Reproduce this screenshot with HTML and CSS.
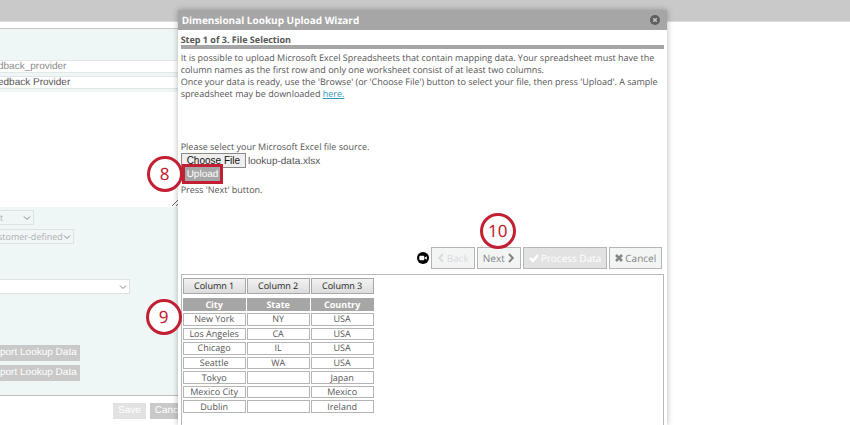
FILE: index.html
```html
<!DOCTYPE html>
<html lang="en">
<head>
  <meta charset="UTF-8">
  <meta name="viewport" content="width=device-width, initial-scale=1.0">
  <title>Dimensional Lookup Upload Wizard</title>
  <link rel="stylesheet" href="styles.css">
</head>
<body>
  <header class="topbar"></header>

  <!-- Lookup form behind the dialog -->
  <form class="lookup">
    <div class="panel">
      <input class="field muted" type="text" value="dback_provider" aria-label="Code" readonly>
      <input class="field" type="text" value="edback Provider" aria-label="Name">
      <textarea class="description" aria-label="Description"></textarea>
      <select class="pick type" aria-label="Type" disabled><option>t</option></select>
      <select class="pick source" aria-label="Source" disabled><option>stomer-defined</option></select>
      <select class="pick parent" aria-label="Parent"><option></option></select>
      <button class="grey data" type="button">port Lookup Data</button>
      <button class="grey data" type="button">port Lookup Data</button>
    </div>
    <div class="form-actions">
      <button class="grey save" type="button" disabled>Save</button>
      <button class="grey" type="button">Cancel</button>
    </div>
  </form>

  <!-- Upload wizard -->
  <section class="dialog" role="dialog" aria-labelledby="title">
    <div class="dialog-title">
      <h1 id="title">Dimensional Lookup Upload Wizard</h1>
      <button class="close" type="button" aria-label="Close">
        <svg viewBox="0 0 10 10" width="10" height="10"><circle cx="5" cy="5" r="5" fill="#5e5e5e"/><path d="M3.2 3.2l3.6 3.6M6.8 3.2L3.2 6.8" stroke="#c4c4c4" stroke-width="1.5"/></svg>
      </button>
    </div>
    <div class="dialog-body">
      <h2>Step 1 of 3. File Selection</h2>
      <div class="intro">
        <p>It is possible to upload Microsoft Excel Spreadsheets that contain mapping data. Your spreadsheet must have the column names as the first row and only one worksheet consist of at least two columns.</p>
        <p>Once your data is ready, use the 'Browse' (or 'Choose File') button to select your file, then press 'Upload'. A sample spreadsheet may be downloaded <a href="#">here.</a></p>
      </div>
      <div class="upload">
        <label for="file">Please select your Microsoft Excel file source.</label>
        <input id="file" type="file">
        <div class="upload-row">
          <button class="upload-button" type="button">Upload</button>
          <span class="badge badge-8">8</span>
        </div>
        <p>Press 'Next' button.</p>
      </div>
      <div class="steps">
        <svg class="camera" viewBox="0 0 12 12" width="12" height="12"><circle cx="6" cy="6" r="6" fill="#000"/><rect x="2.3" y="3.8" width="5" height="4.4" rx="1" fill="#fff"/><path d="M7.6 5.7l2.2-1.5v3.6L7.6 6.3z" fill="#fff"/></svg>
        <button type="button" disabled>
          <svg viewBox="0 0 8 10" width="8" height="10"><path d="M6 1L2.2 5 6 9" fill="none" stroke="currentColor" stroke-width="2"/></svg>
          Back
        </button>
        <div class="next">
          <button type="button">
            Next
            <svg viewBox="0 0 8 10" width="8" height="10"><path d="M2 1l3.8 4L2 9" fill="none" stroke="currentColor" stroke-width="2"/></svg>
          </button>
          <span class="badge badge-10">10</span>
        </div>
        <button class="process" type="button" disabled>
          <svg viewBox="0 0 10 10" width="10" height="10"><path d="M1 5l3 3 5-6" fill="none" stroke="currentColor" stroke-width="2.4"/></svg>
          Process Data
        </button>
        <button type="button">
          <svg viewBox="0 0 8 10" width="8" height="10"><path d="M1 2l6 6M7 2L1 8" stroke="currentColor" stroke-width="2.6"/></svg>
          Cancel
        </button>
      </div>
      <div class="preview">
        <div class="columns">
          <button type="button">Column 1</button>
          <button type="button">Column 2</button>
          <button type="button">Column 3</button>
        </div>
        <table>
          <thead>
            <tr><th>City</th><th>State</th><th>Country</th></tr>
          </thead>
          <tbody>
            <tr><td>New York</td><td>NY</td><td>USA</td></tr>
            <tr><td>Los Angeles</td><td>CA</td><td>USA</td></tr>
            <tr><td>Chicago</td><td>IL</td><td>USA</td></tr>
            <tr><td>Seattle</td><td>WA</td><td>USA</td></tr>
            <tr><td>Tokyo</td><td></td><td>Japan</td></tr>
            <tr><td>Mexico City</td><td></td><td>Mexico</td></tr>
            <tr><td>Dublin</td><td></td><td>Ireland</td></tr>
          </tbody>
        </table>
        <span class="badge badge-9">9</span>
      </div>
    </div>
  </section>

  <script>
    // Preselect the lookup file
    const files = new DataTransfer();
    files.items.add(new File([''], 'lookup-data.xlsx'));
    document.getElementById('file').files = files.files;
  </script>
</body>
</html>
```
FILE: styles.css
```css
* {
  box-sizing: border-box;
  text-rendering: geometricPrecision;
}

body {
  margin: 0;
  min-height: 100vh;
  overflow: hidden;
  position: relative;
  background: #fff;
  color: #555;
  font: 9px/12px 'Open Sans', 'Noto Sans', sans-serif;
}

h1, h2, p {
  margin: 0;
}

button, input, select, textarea {
  font: inherit;
  color: inherit;
  margin: 0;
}

.topbar {
  height: 22px;
  background: #c9c9c9;
  border-bottom: 1px solid #dcdcdc;
}

/* Form behind */
.lookup {
  width: 50%;
  padding-top: 6px;
}

.panel {
  display: flex;
  flex-direction: column;
  align-items: flex-start;
  height: 368px;
  padding-top: 31px;
  background: #eef6f6;
  border-top: 1px solid #c6c6c6;
  border-bottom: 1px solid #bdbdbd;
}

.field {
  width: 100%;
  height: 13px;
  margin-bottom: 3px;
  padding: 0;
  border: 1px solid #e2e8e8;
  border-left: 0;
  background: #fff;
  color: #555;
  font: 10px/11px 'Liberation Sans', sans-serif;
  text-indent: -2px;
}

.muted {
  color: #8c8c8c;
}

.description {
  width: 180px;
  height: 115px;
  margin-bottom: 3px;
  border: 0;
  background: #fff;
}

.pick {
  appearance: none;
  height: 15px;
  margin-bottom: 4px;
  padding: 0;
  border: 1px solid #dde2e2;
  border-left: 0;
  border-radius: 0;
  background: #f0f6f6 url("data:image/svg+xml,%3Csvg xmlns='http://www.w3.org/2000/svg' width='8' height='8'%3E%3Cpath d='M1 2.5l3 3 3-3' fill='none' stroke='%23888'/%3E%3C/svg%3E") no-repeat right 2px center;
  color: #b0b0b0;
  opacity: 1;
}

.type {
  width: 34px;
}

.source {
  width: 74px;
  text-indent: -2px;
}

.parent {
  width: 130px;
  margin: 31px 0 51px;
  background-color: #fff;
}

.grey {
  height: 16px;
  padding: 0 5px;
  border: 0;
  background: #c9c9c9;
  color: #fff;
  font: 10px/14px 'Liberation Sans', sans-serif;
}

.data {
  margin-bottom: 4px;
  padding: 0 3px 0 0;
}

.form-actions {
  display: flex;
  gap: 4px;
  padding: 7px 0 0 113px;
}

.save {
  background: #e2e2e2;
}

/* Dialog */
.dialog {
  position: absolute;
  top: 10px;
  left: 20.9%;
  width: 57.6%;
  bottom: 0;
  display: flex;
  flex-direction: column;
  background: #fff;
  box-shadow: 0 0 6px rgba(0, 0, 0, 0.3);
}

.dialog-title {
  display: flex;
  justify-content: space-between;
  align-items: center;
  height: 20px;
  padding: 0 7px 0 4px;
  background: #a6a6a6;
  color: #fff;
}

h1 {
  font-size: 10px;
  line-height: 20px;
}

.close {
  display: flex;
  padding: 0;
  border: 0;
  background: none;
}

.dialog-body {
  flex: 1;
  display: flex;
  flex-direction: column;
  padding: 4px 3px 0;
}

h2 {
  font-size: 9px;
  line-height: 11px;
  border-bottom: 4px solid #a6a6a6;
}

.intro {
  height: 92px;
  padding: 3px 3px 0 0;
}

.intro a {
  color: #2f9bb8;
}

.upload {
  height: 106px;
}

.upload label {
  display: block;
}

.upload input {
  display: block;
  width: 100%;
  height: 15px;
  font: 10px/14px 'Liberation Sans', sans-serif;
}

.upload input::file-selector-button {
  height: 15px;
  margin-right: 2px;
  padding: 0 5px;
  border: 1px solid #8a8a8a;
  border-radius: 0;
  background: #efefef;
  color: #111;
  font: 10px/13px 'Liberation Sans', sans-serif;
}

.upload-row {
  position: relative;
  display: flex;
  margin-top: -4px;
  padding-left: 1px;
}

.upload-button {
  height: 20px;
  padding: 1px 2px 0;
  border: 3px solid #c22032;
  background: #a6a6a6;
  color: #fff;
  font: 10px/14px 'Liberation Sans', sans-serif;
}

.steps {
  display: flex;
  justify-content: flex-end;
  align-items: center;
  gap: 2px;
  margin: 0 2px 5px 0;
}

.steps button {
  display: flex;
  align-items: center;
  gap: 2px;
  height: 22px;
  padding: 0 5px;
  border: 1px solid #b5b5b5;
  background: #f3f5f5;
  color: #858585;
  font-size: 10px;
}

.steps button:disabled {
  color: #d8dcdc;
}

.steps .process {
  background: #e2e2e2;
}

.steps .process:disabled {
  color: #fff;
}

.next {
  position: relative;
}

/* Preview of the uploaded sheet */
.preview {
  position: relative;
  flex: 1;
  padding: 3px 1px;
  border: 1px solid #b8b8b8;
  border-bottom: 0;
}

.columns {
  display: grid;
  grid-template-columns: repeat(3, 63px);
  gap: 1px;
}

.columns button {
  height: 16px;
  padding: 0;
  border: 1px solid #a8a8a8;
  background: linear-gradient(#f2f2f2, #dcdcdc);
  color: #222;
}

table {
  width: 193px;
  height: 119px;
  margin: 2px 0 0 -1px;
  table-layout: fixed;
  border-spacing: 1px 2px;
}

th, td {
  padding: 0;
  line-height: 10px;
  text-align: center;
}

th {
  height: 13px;
  background: #a6a6a6;
  color: #fff;
}

td {
  border: 1px solid #b5b5b5;
}

/* Step markers */
.badge {
  position: absolute;
  width: 36px;
  height: 36px;
  border: 3px solid #c22032;
  border-radius: 50%;
  background: #fff;
  color: #c22032;
  font: 17px/30px 'Noto Sans', sans-serif;
  text-align: center;
}

.badge-8 {
  top: -8px;
  left: -34px;
}

.badge-9 {
  top: 24px;
  left: -36px;
}

.badge-10 {
  top: -34px;
  left: 3px;
}
```
